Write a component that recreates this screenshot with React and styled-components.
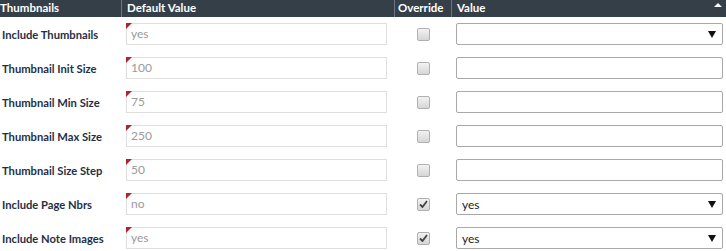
import React from "react";
import styled, { createGlobalStyle } from "styled-components";

const Global = createGlobalStyle`
  html, body { margin: 0; padding: 0; background: #fff; }
  body { font-family: Lato, "Open Sans", sans-serif; }
`;

const Grid = styled.div`
  display: grid;
  grid-template-columns: 121px 273px 57px 275px;
  width: 726px;
`;

const HeadCell = styled.div`
  height: 17px;
  background: #343f48;
  color: #fff;
  font-weight: 700;
  font-size: 11.5px;
  line-height: 16px;
  padding-left: ${(p) => p.$pad ?? 4}px;
  box-sizing: border-box;
  border-left: ${(p) => (p.$first ? "none" : "1px solid #6c777f")};
  position: relative;
  white-space: nowrap;
`;

const SortArrow = styled.span`
  position: absolute;
  right: 4px;
  top: 3px;
  width: 0;
  height: 0;
  border-left: 4px solid transparent;
  border-right: 4px solid transparent;
  border-bottom: 4px solid #fff;
`;

const Cell = styled.div`
  height: 34px;
  display: flex;
  align-items: center;
  box-sizing: border-box;
  padding-left: ${(p) => p.$pad ?? 0}px;
  justify-content: ${(p) => (p.$center ? "center" : "flex-start")};
`;

const Label = styled.span`
  font-size: 11.2px;
  font-weight: 700;
  color: #1e2f46;
  padding-left: 2px;
  white-space: nowrap;
`;

const DefaultBox = styled.div`
  position: relative;
  width: 261px;
  height: 22px;
  box-sizing: border-box;
  border: 1px solid #dedede;
  color: #9a9a9a;
  font-size: 12px;
  line-height: 20px;
  padding-left: 4px;
`;

const Corner = styled.span`
  position: absolute;
  left: -1px;
  top: -1px;
  width: 0;
  height: 0;
  border-top: 6px solid #b0232a;
  border-right: 6px solid transparent;
`;

const Check = styled.span`
  width: 11px;
  height: 11px;
  border: 1px solid #b0b0b0;
  border-radius: 2px;
  background: linear-gradient(#f2f2f2, #d6d6d6);
  display: flex;
  align-items: center;
  justify-content: center;
  margin-left: 2px;
`;

const ValueBox = styled.div`
  width: 267px;
  height: 22px;
  box-sizing: border-box;
  border: 1px solid #a8a8a8;
  border-radius: 2px;
  display: flex;
  align-items: center;
  justify-content: space-between;
  padding: 0 6px 0 5px;
  font-size: 12px;
  color: #222;
`;

const Arrow = styled.span`
  width: 0;
  height: 0;
  border-left: 4px solid transparent;
  border-right: 4px solid transparent;
  border-top: 7px solid #111;
`;

const rows = [
  { label: "Include Thumbnails", def: "yes", select: true, checked: false, value: "" },
  { label: "Thumbnail Init Size", def: "100" },
  { label: "Thumbnail Min Size", def: "75" },
  { label: "Thumbnail Max Size", def: "250" },
  { label: "Thumbnail Size Step", def: "50" },
  { label: "Include Page Nbrs", def: "no", select: true, checked: true, value: "yes" },
  { label: "Include Note Images", def: "yes", select: true, checked: true, value: "yes" },
];

export default function App() {
  return (
    <>
      <Global />
      <Grid>
        <HeadCell $first $pad={0}>Thumbnails</HeadCell>
        <HeadCell $pad={5}>Default Value</HeadCell>
        <HeadCell $pad={3}>Override</HeadCell>
        <HeadCell $pad={5}>
          Value
          <SortArrow />
        </HeadCell>
        {rows.map((r) => (
          <React.Fragment key={r.label}>
            <Cell>
              <Label>{r.label}</Label>
            </Cell>
            <Cell $pad={5}>
              <DefaultBox>
                <Corner />
                {r.def}
              </DefaultBox>
            </Cell>
            <Cell $center>
              <Check>
                {r.checked && (
                  <svg width="9" height="8" viewBox="0 0 9 8">
                    <path d="M1 4.5 L3.5 7 L8 1" stroke="#444" strokeWidth="1.8" fill="none" />
                  </svg>
                )}
              </Check>
            </Cell>
            <Cell $pad={5}>
              <ValueBox>
                <span>{r.value}</span>
                {r.select && <Arrow />}
              </ValueBox>
            </Cell>
          </React.Fragment>
        ))}
      </Grid>
    </>
  );
}
